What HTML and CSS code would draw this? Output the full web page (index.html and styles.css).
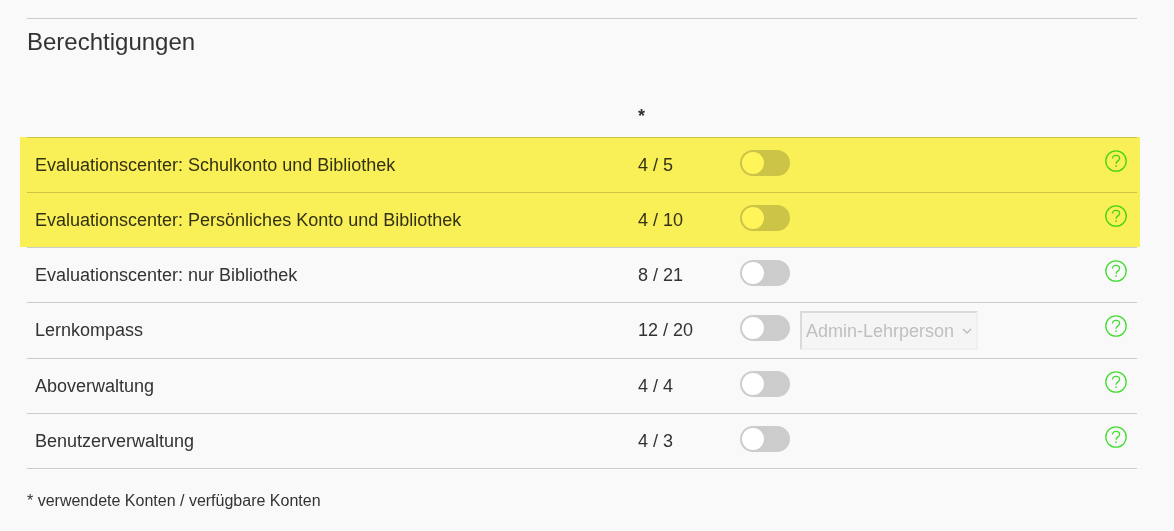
FILE: index.html
```
<!DOCTYPE html>
<html lang="de">
    <head>
        <meta charset="UTF-8" />
        <meta name="viewport" content="width=device-width, initial-scale=1.0" />
        <title>Berechtigungen</title>
        <link rel="stylesheet" href="styles.css">
    </head>
    <body>
        <!-- Fragezeichen-Symbol für alle Zeilen -->
        <svg class="symbols" aria-hidden="true">
            <symbol id="help" viewBox="0 0 22 22">
                <circle cx="11" cy="11" r="10.2" />
                <path d="M7.5 8.6C7.5 6.4 8.9 5.3 11 5.3s3.6 1.2 3.6 3.1c0 2.5-3.5 2.5-3.5 5.3" />
                <path d="M11.1 15.2v1.7" />
            </symbol>
        </svg>

        <section class="permissions">
            <h2>Berechtigungen</h2>

            <table>
                <colgroup>
                    <col class="col-name">
                    <col class="col-count">
                    <col class="col-switch">
                    <col>
                    <col class="col-help">
                </colgroup>
                <thead>
                    <tr>
                        <td></td>
                        <th scope="col">*</th>
                        <td></td>
                        <td></td>
                        <td></td>
                    </tr>
                </thead>
                <tbody class="marked">
                    <tr>
                        <td><label for="schulkonto">Evaluationscenter: Schulkonto und Bibliothek</label></td>
                        <td>4 / 5</td>
                        <td class="control"><input type="checkbox" class="switch" id="schulkonto"></td>
                        <td></td>
                        <td class="help-cell"><button type="button" class="help" aria-label="Hilfe"><svg><use href="#help" /></svg></button></td>
                    </tr>
                    <tr>
                        <td><label for="persoenlich">Evaluationscenter: Persönliches Konto und Bibliothek</label></td>
                        <td>4 / 10</td>
                        <td class="control"><input type="checkbox" class="switch" id="persoenlich"></td>
                        <td></td>
                        <td class="help-cell"><button type="button" class="help" aria-label="Hilfe"><svg><use href="#help" /></svg></button></td>
                    </tr>
                </tbody>
                <tbody>
                    <tr>
                        <td><label for="bibliothek">Evaluationscenter: nur Bibliothek</label></td>
                        <td>8 / 21</td>
                        <td class="control"><input type="checkbox" class="switch" id="bibliothek"></td>
                        <td></td>
                        <td class="help-cell"><button type="button" class="help" aria-label="Hilfe"><svg><use href="#help" /></svg></button></td>
                    </tr>
                    <tr>
                        <td><label for="lernkompass">Lernkompass</label></td>
                        <td>12 / 20</td>
                        <td class="control"><input type="checkbox" class="switch" id="lernkompass"></td>
                        <td class="role-cell">
                            <div class="role">
                                <select aria-label="Rolle Lernkompass" disabled>
                                    <option>Admin-Lehrperson</option>
                                </select>
                                <svg viewBox="0 0 10 6"><path d="M1 1l4 4 4-4" /></svg>
                            </div>
                        </td>
                        <td class="help-cell"><button type="button" class="help" aria-label="Hilfe"><svg><use href="#help" /></svg></button></td>
                    </tr>
                    <tr>
                        <td><label for="abo">Aboverwaltung</label></td>
                        <td>4 / 4</td>
                        <td class="control"><input type="checkbox" class="switch" id="abo"></td>
                        <td></td>
                        <td class="help-cell"><button type="button" class="help" aria-label="Hilfe"><svg><use href="#help" /></svg></button></td>
                    </tr>
                    <tr>
                        <td><label for="benutzer">Benutzerverwaltung</label></td>
                        <td>4 / 3</td>
                        <td class="control"><input type="checkbox" class="switch" id="benutzer"></td>
                        <td></td>
                        <td class="help-cell"><button type="button" class="help" aria-label="Hilfe"><svg><use href="#help" /></svg></button></td>
                    </tr>
                </tbody>
            </table>

            <p class="note">* verwendete Konten / verfügbare Konten</p>
        </section>
    </body>
</html>
```
FILE: styles.css
```
body {
    margin: 0;
    padding: 18px 37px 16px 27px;
    font-family: Arial, "Liberation Sans", sans-serif;
    font-size: 18px;
    line-height: 26px;
    color: #333;
    background-color: #f9f9f9;
}
.symbols {
    display: none;
}
.permissions {
    border-top: 1px solid #ccc;
}
h2 {
    margin: 8px 0 36px;
    font-size: 24px;
    font-weight: normal;
    line-height: 30px;
}
table {
    width: 100%;
    table-layout: fixed;
    border-collapse: separate;
    border-spacing: 0;
}
.col-name {
    width: 603px;
}
.col-count {
    width: 102px;
}
.col-switch {
    width: 68px;
}
.col-help {
    width: 48px;
}
th, td {
    padding: 14px 8px;
    border-bottom: 1px solid #ccc;
    text-align: left;
    vertical-align: top;
}
thead th, thead td {
    padding: 10px 8px 8px;
}
tbody td.control {
    padding: 12px 8px 0;
}
td.role-cell {
    padding: 8px 0;
}
td.help-cell {
    padding: 12px 10px 0 0;
}

/* Textmarker über den ersten beiden Zeilen */
.marked {
    position: relative;
}
.marked::after {
    content: "";
    position: absolute;
    top: -1px;
    right: -3px;
    bottom: 1px;
    left: -7px;
    background-color: #fff559;
    mix-blend-mode: multiply;
    pointer-events: none;
}

.switch {
    appearance: none;
    display: block;
    width: 50px;
    height: 26px;
    margin: 0;
    padding: 2px;
    box-sizing: border-box;
    border-radius: 13px;
    background-color: #ccc;
    cursor: pointer;
}
.switch::before {
    content: "";
    display: block;
    width: 22px;
    height: 22px;
    border-radius: 50%;
    background-color: #fff;
}
.switch:checked {
    background-color: #3c0;
}
.switch:checked::before {
    margin-left: auto;
}

.role {
    position: relative;
    width: 178px;
}
.role select {
    appearance: none;
    display: block;
    width: 100%;
    height: 39px;
    padding: 0 4px;
    box-sizing: border-box;
    border: 2px solid;
    border-color: #dadada #f0f0f0 #f0f0f0 #dadada;
    border-radius: 0;
    background-color: #f5f5f5;
    color: #bfbfbf;
    font: inherit;
    opacity: 1;
}
.role svg {
    position: absolute;
    top: 17px;
    right: 6px;
    width: 10px;
    height: 6px;
    fill: none;
    stroke: #bbb;
    stroke-width: 1.4;
    pointer-events: none;
}

.help {
    display: block;
    width: 22px;
    height: 22px;
    margin-left: auto;
    padding: 0;
    border: none;
    background: none;
    cursor: pointer;
}
.help svg {
    display: block;
    width: 22px;
    height: 22px;
    fill: none;
    stroke: #4d3;
    stroke-width: 1.3;
}
.note {
    margin: 19px 0 0;
    font-size: 16px;
}
```
